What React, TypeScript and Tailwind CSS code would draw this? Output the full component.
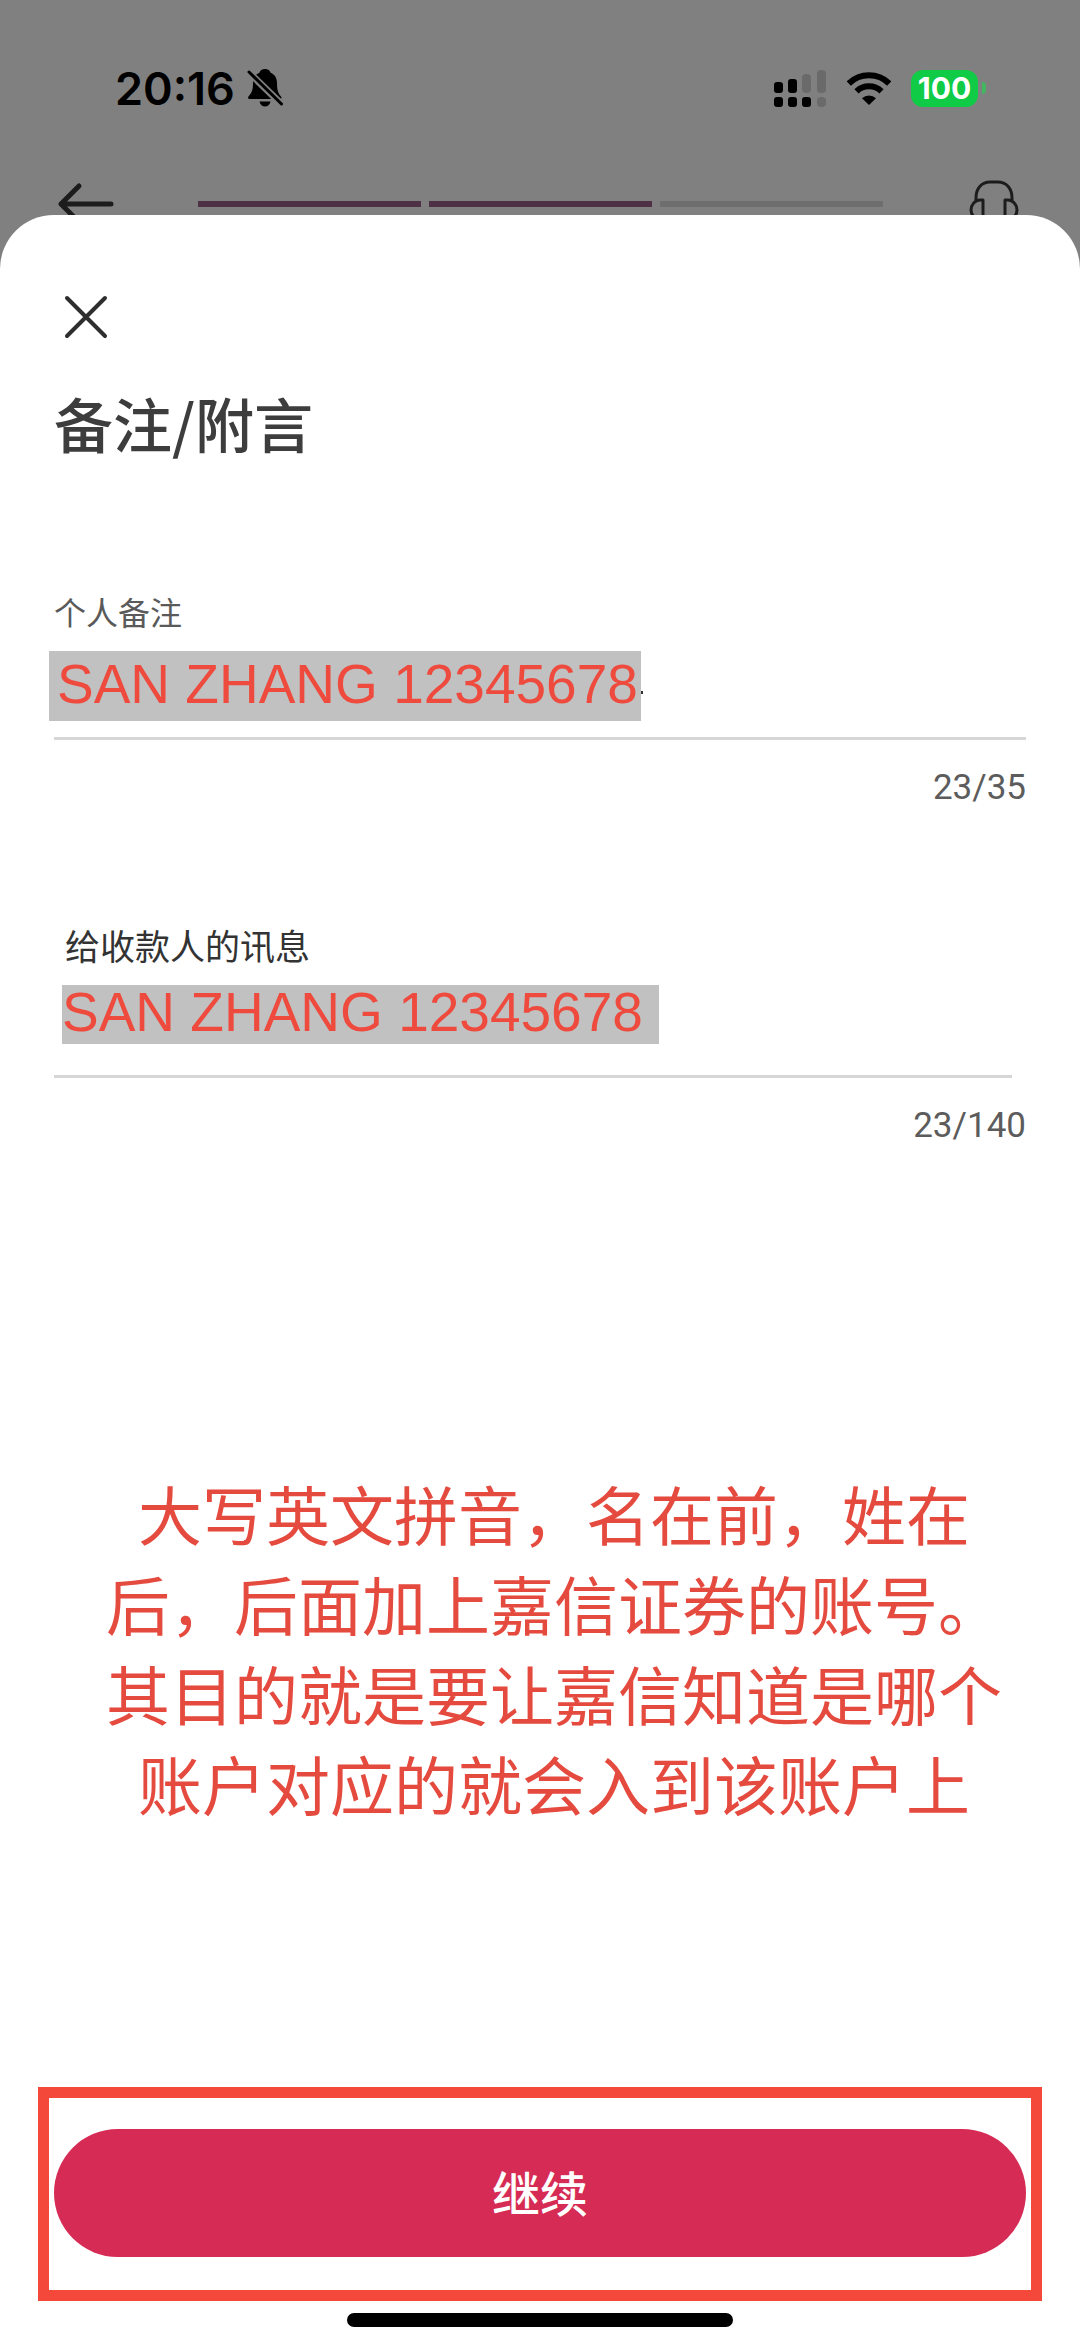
import { useState } from 'react';

const STEPS = [
  { label: '步骤 1', done: true },
  { label: '步骤 2', done: true },
  { label: '步骤 3', done: false },
];

function BellOffIcon() {
  return (
    <svg className="h-10 w-9" viewBox="0 0 36 40" aria-hidden="true">
      <path
        d="M18 1c3 0 5 1.600 5.600 3.800C28 6.500 30 10.500 30 15c0 7 1 10 4 13.500 1 1.300.6 2.500-1 2.500H3C1 31 .6 29.600 1.600 28.300 5 24.500 6 22 6 15c0-4.500 2-8.500 6.400-10.200C13 2.600 15 1 18 1z"
        fill="#000"
      />
      <path d="M12.500 33.500h11c-.5 3-2.800 5-5.500 5s-5-2-5.500-5z" fill="#000" />
      <path d="M-1 1.500 37 38.500" stroke="#808080" strokeWidth="7" />
      <path d="M2 4 34.500 36" stroke="#000" strokeWidth="3" strokeLinecap="round" />
    </svg>
  );
}

function SignalIcon() {
  return (
    <svg className="h-10 w-[54px]" viewBox="0 0 54 40" aria-hidden="true">
      <g fill="#000">
        <rect x="1" y="14" width="9" height="11" rx="3" />
        <rect x="15" y="11" width="9" height="14" rx="3" />
        <rect x="1" y="29" width="9" height="10" rx="3" />
        <rect x="15" y="29" width="9" height="10" rx="3" />
        <rect x="29" y="29" width="9" height="10" rx="3" />
      </g>
      <g fill="#6a6a6a">
        <rect x="29" y="6" width="9" height="19" rx="4" />
        <rect x="44" y="2" width="9" height="23" rx="4" />
        <rect x="44" y="29" width="9" height="10" rx="4" />
      </g>
    </svg>
  );
}

function WifiIcon() {
  return (
    <svg className="h-[34px] w-11" viewBox="1 0 44 34" aria-hidden="true">
      <g fill="none" stroke="#000" strokeWidth="6">
        <path d="M2.800 12.500a29 29 0 0 1 40.400 0" />
        <path d="M10.500 20.300a18 18 0 0 1 25 0" />
      </g>
      <path d="M23 34 16 27.200a10.200 10.200 0 0 1 14 0z" fill="#000" />
    </svg>
  );
}

function BatteryIcon() {
  return (
    <div className="flex items-center gap-1">
      <span className="flex h-[37px] w-[67px] items-center justify-center rounded-xl bg-[#0fcb46] font-[Inter,sans-serif] text-[30px] leading-none font-bold text-white">
        100
      </span>
      <span className="h-3 w-1 rounded-r-full bg-[#3fb860]" />
    </div>
  );
}

function ArrowLeftIcon() {
  return (
    <svg className="h-11 w-[58px]" viewBox="0 0 58 44" aria-hidden="true">
      <path
        d="M23 4 5 22 23 40M5 22h50"
        fill="none"
        stroke="#1c1c1c"
        strokeWidth="5"
        strokeLinecap="round"
        strokeLinejoin="round"
      />
    </svg>
  );
}

function HeadphonesIcon() {
  return (
    <svg className="h-12 w-[50px]" viewBox="0 0 50 48" aria-hidden="true">
      <g fill="none" stroke="#1c1c1c" strokeWidth="3" strokeLinejoin="round">
        <path d="M7 20v-2C7 8 13 2 21 2h8c8 0 14 6 14 16v2" />
        <path d="M14 20v20h-3C6 39 2 35 2 30s4-10 9-10z" />
        <path d="M36 20v20h3c5 0 9-5 9-10s-4-10-9-10z" />
      </g>
    </svg>
  );
}

function CloseIcon() {
  return (
    <svg className="h-12 w-12" viewBox="0 0 48 48" aria-hidden="true">
      <path d="M5 5 43 43M43 5 5 43" stroke="#2e2e2e" strokeWidth="4" strokeLinecap="round" />
    </svg>
  );
}

export default function App() {
  const [remark, setRemark] = useState('SAN ZHANG 12345678');
  const [message, setMessage] = useState('SAN ZHANG 12345678');

  return (
    <div className="min-h-screen bg-[#808080] font-['Noto_Sans_CJK_SC',sans-serif]">
      {/* Status bar */}
      <div className="flex h-44 items-start justify-between pt-16 pr-[94px] pl-[115px]">
        <div className="flex h-12 items-center gap-3">
          <span className="font-[Inter,sans-serif] text-[45px] leading-none font-semibold text-black">20:16</span>
          <BellOffIcon />
        </div>
        <div className="flex h-12 items-center gap-5">
          <SignalIcon />
          <WifiIcon />
          <BatteryIcon />
        </div>
      </div>

      {/* Page header, dimmed behind the sheet */}
      <header className="-mb-[17px] flex h-14 items-center justify-between pr-[61px] pl-14">
        <button type="button" aria-label="返回">
          <ArrowLeftIcon />
        </button>
        <ol className="mr-[86px] ml-[84px] flex flex-1 gap-2">
          {STEPS.map((step) => (
            <li
              key={step.label}
              aria-label={step.label}
              className={step.done ? 'h-1.5 flex-1 bg-[#4f3145]' : 'h-1.5 flex-1 bg-[#6e6e6e]'}
            />
          ))}
        </ol>
        <button type="button" aria-label="客服">
          <HeadphonesIcon />
        </button>
      </header>

      {/* Bottom sheet */}
      <main className="relative rounded-t-[54px] bg-white pt-[78px] pb-[21px]">
        <div className="px-[54px]">
          <button type="button" aria-label="关闭" className="ml-2 block">
            <CloseIcon />
          </button>
          <h1 className="mt-[38px] text-[59px] leading-[88px] font-medium text-[#3d3d3d]">备注/附言</h1>

          {/* Personal remark */}
          <div className="mt-[120px]">
            <label htmlFor="remark" className="block text-[32px] leading-12 text-[#5a5a5a]">
              个人备注
            </label>
            <div className="mt-4 -ml-[5px] flex items-center">
              <input
                id="remark"
                type="text"
                maxLength={35}
                value={remark}
                onChange={(e) => setRemark(e.target.value)}
                className="block h-[70px] w-[592px] bg-[#c1c1c1] pb-1 pl-2 font-['Liberation_Sans',Arial,sans-serif] text-[55px] leading-none text-[#ee4b3e] outline-none"
              />
              <span className="mt-3 h-[3px] w-0.5 bg-[#333]" />
            </div>
            <div className="mt-4 h-[3px] bg-[#d6d6d6]" />
            <p className="mt-6 text-right font-[Roboto,sans-serif] text-[35px] leading-12 text-[#5c5c5c]">23/35</p>
          </div>

          {/* Message to the payee */}
          <div className="mt-[109px]">
            <label htmlFor="message" className="ml-[11px] block text-[35px] leading-12 text-[#333]">
              给收款人的讯息
            </label>
            <input
              id="message"
              type="text"
              maxLength={140}
              value={message}
              onChange={(e) => setMessage(e.target.value)}
              className="mt-4 ml-2 block h-[59px] w-[597px] bg-[#c1c1c1] pb-1.5 font-['Liberation_Sans',Arial,sans-serif] text-[55px] leading-none text-[#ee4b3e] outline-none"
            />
            <div className="mt-[31px] mr-[14px] h-[3px] bg-[#d6d6d6]" />
            <p className="mt-6 text-right font-[Roboto,sans-serif] text-[35px] leading-12 text-[#5c5c5c]">23/140</p>
          </div>
        </div>

        {/* Annotation */}
        <p className="mt-[317px] pl-7 text-center text-[64px] leading-[90px] text-[#e54a3f]">
          大写英文拼音，名在前，姓在
          <br />
          后，后面加上嘉信证券的账号。
          <br />
          其目的就是要让嘉信知道是哪个
          <br />
          账户对应的就会入到该账户上
        </p>

        <div className="mx-[38px] mt-[260px] border-[11px] border-[#f4483a] px-[5px] pt-[31px] pb-[33px]">
          <button
            type="button"
            className="block h-32 w-full rounded-full bg-[#d62b54] pb-1 text-5xl font-medium text-white"
          >
            继续
          </button>
        </div>

        {/* Home indicator */}
        <div className="mx-auto mt-3 h-3.5 w-[386px] rounded-full bg-black" />
      </main>
    </div>
  );
}
